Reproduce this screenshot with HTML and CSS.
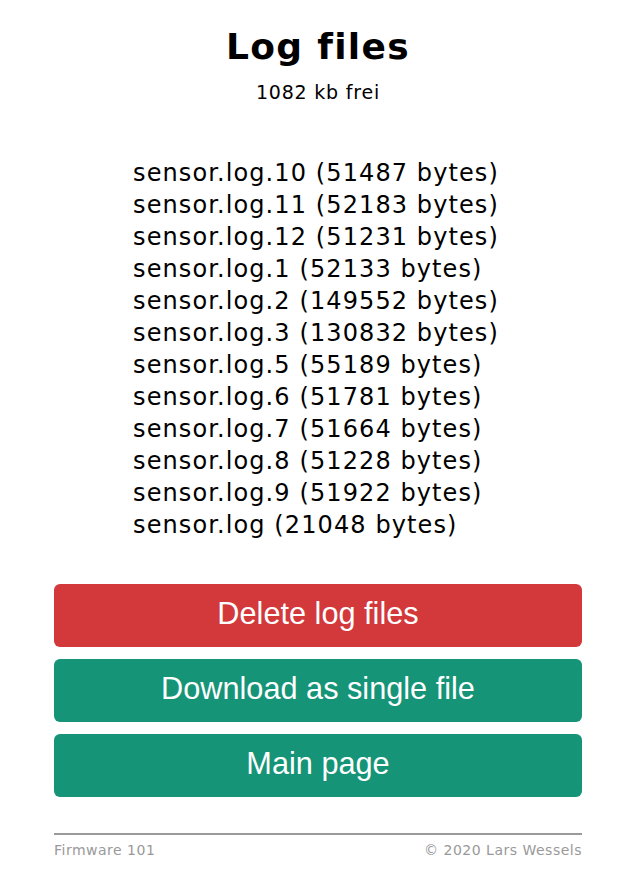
FILE: index.html
```html
<!DOCTYPE html>
<html lang="de">
<head>
<meta charset="utf-8">
<title>Log files</title>
<link rel="stylesheet" href="styles.css">
</head>
<body>
<div class="page">
  <h1 class="title">Log files</h1>
  <div class="free">1082 kb frei</div>
  <div class="list-wrap">
    <ul class="files">
      <li>sensor.log.10 (51487 bytes)</li>
      <li>sensor.log.11 (52183 bytes)</li>
      <li>sensor.log.12 (51231 bytes)</li>
      <li>sensor.log.1 (52133 bytes)</li>
      <li>sensor.log.2 (149552 bytes)</li>
      <li>sensor.log.3 (130832 bytes)</li>
      <li>sensor.log.5 (55189 bytes)</li>
      <li>sensor.log.6 (51781 bytes)</li>
      <li>sensor.log.7 (51664 bytes)</li>
      <li>sensor.log.8 (51228 bytes)</li>
      <li>sensor.log.9 (51922 bytes)</li>
      <li>sensor.log (21048 bytes)</li>
    </ul>
  </div>
  <div class="buttons">
    <a class="btn btn-red" href="#">Delete log files</a>
    <a class="btn btn-green" href="#">Download as single file</a>
    <a class="btn btn-green" href="#">Main page</a>
  </div>
  <footer class="footer">
    <span>Firmware 101</span>
    <span>© 2020 Lars Wessels</span>
  </footer>
</div>
</body>
</html>
```
FILE: styles.css
```css
html, body {
  margin: 0;
  padding: 0;
  background: #fff;
}
body {
  font-family: "DejaVu Sans", Verdana, sans-serif;
  color: #000;
}
.page {
  width: 528px;
  margin: 0 0 0 54px;
  padding-top: 22px;
}
.title {
  margin: 0;
  font-size: 36px;
  font-weight: bold;
  text-align: center;
  line-height: 50px;
  letter-spacing: 1.3px;
}
.free {
  text-align: center;
  font-size: 19px;
  line-height: 24px;
  margin-top: 8px;
  letter-spacing: 0.8px;
}
.list-wrap {
  display: flex;
  justify-content: center;
  margin-top: 53px;
  padding-right: 4px;
}
.files {
  list-style: none;
  margin: 0;
  padding: 0;
  font-size: 24px;
  line-height: 32px;
  letter-spacing: 1.1px;
}
.buttons {
  display: flex;
  flex-direction: column;
  gap: 12px;
  margin-top: 43px;
}
.btn {
  display: flex;
  align-items: center;
  justify-content: center;
  height: 63px;
  box-sizing: border-box;
  padding-bottom: 3px;
  border-radius: 6px;
  color: #fff;
  text-decoration: none;
  font-family: "Liberation Sans", Arial, sans-serif;
  font-size: 30.7px;
}
.btn-red { background: #d3383b; }
.btn-green { background: #159477; }
.footer {
  margin-top: 36px;
  border-top: 2px solid #9a9a9a;
  display: flex;
  justify-content: space-between;
  padding-top: 7px;
  font-size: 14px;
  letter-spacing: 0.5px;
  color: #999;
}
```
